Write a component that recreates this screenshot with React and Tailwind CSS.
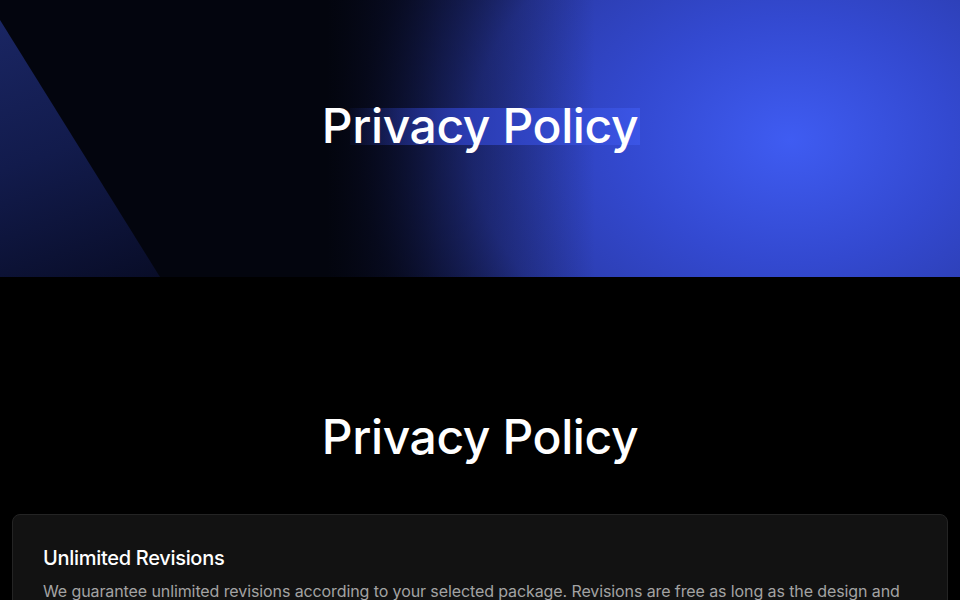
// Privacy Policy page — hero banner + first policy card
const FONT = { fontFamily: 'Inter, "Noto Sans", sans-serif' };

function Hero() {
  return (
    <section className="relative h-[277px] overflow-hidden bg-[#03050e]">
      {/* blue glow on the right */}
      <div className="absolute inset-0 bg-[radial-gradient(ellipse_580px_440px_at_790px_140px,#3f5cf2_0%,#3349d0_28%,#2a3aa8_55%,rgba(30,40,120,0.6)_75%,rgba(3,5,14,0)_100%)]" />
      <div className="absolute inset-0 bg-[linear-gradient(90deg,#03050e_0%,#03050e_34%,rgba(3,5,14,0.5)_46%,rgba(3,5,14,0)_62%)]" />
      {/* left triangle shard */}
      <div className="absolute left-0 top-0 h-full w-[180px] bg-[linear-gradient(160deg,#1b2766_0%,#121b4c_50%,#080c26_100%)] [clip-path:polygon(0_20px,0_100%,160px_100%)]" />
      <div className="relative flex h-full items-start justify-center pt-[98px]">
        <h1 className="relative text-[48px] font-medium leading-[56px] tracking-[-0.4px] text-white">
          <span className="absolute left-[28px] right-[-2px] top-[10px] h-[37px] bg-[linear-gradient(90deg,rgba(20,28,80,0.2)_0%,#2a3bb0_40%,#3b55e6_100%)]" />
          <span className="relative">Privacy Policy</span>
        </h1>
      </div>
    </section>
  );
}

export default function App() {
  return (
    <div className="min-h-[600px] bg-black" style={FONT}>
      <Hero />
      <main className="px-3 pt-[132px] pb-10">
        <h2 className="text-center text-[48px] font-medium leading-[56px] tracking-[-0.4px] text-white">
          Privacy Policy
        </h2>
        <div className="mt-[49px] rounded-lg border border-[#242424] bg-[#121212] px-[30px] pt-[29px] pb-8">
          <h3 className="text-[20px] font-medium leading-7 tracking-[-0.3px] text-white">Unlimited Revisions</h3>
          <p className="mt-1.5 text-[16px] leading-[26px] tracking-[-0.1px] text-[#a3a3a3]">
            We guarantee unlimited revisions according to your selected package. Revisions are free as long as the design and
            concept remain within the original scope of the project. Any new requirements outside that scope may be quoted separately.
          </p>
        </div>
      </main>
    </div>
  );
}
